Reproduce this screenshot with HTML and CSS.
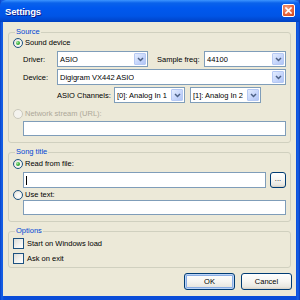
FILE: index.html
```html
<!DOCTYPE html>
<html>
<head>
<meta charset="utf-8">
<title>Settings</title>
<link rel="stylesheet" href="styles.css">
</head>
<body>
<div class="window">
  <div class="titlebar">
    <span class="title">Settings</span>
    <span class="close"><svg width="7" height="7" viewBox="0 0 7 7"><path d="M1 1L6 6M6 1L1 6" stroke="#fff" stroke-width="1.6" stroke-linecap="square"/></svg></span>
  </div>
  <div class="client">
    <fieldset class="group g-source">
      <legend>Source</legend>
      <div class="opt"><span class="radio on"></span><span>Sound device</span></div>
      <div class="row r-driver">
        <span class="lbl w34">Driver:</span>
        <div class="select s-driver"><span class="val">ASIO</span><span class="arrow"><svg width="7" height="5" viewBox="0 0 7 5"><path d="M1 1L3.5 3.5L6 1" fill="none" stroke="#4D6185" stroke-width="1.5"/></svg></span></div>
        <span class="lbl w47 gap9">Sample freq:</span>
        <div class="select s-freq"><span class="val">44100</span><span class="arrow"><svg width="7" height="5" viewBox="0 0 7 5"><path d="M1 1L3.5 3.5L6 1" fill="none" stroke="#4D6185" stroke-width="1.5"/></svg></span></div>
      </div>
      <div class="row r-device">
        <span class="lbl w34">Device:</span>
        <div class="select grow"><span class="val">Digigram VX442 ASIO</span><span class="arrow"><svg width="7" height="5" viewBox="0 0 7 5"><path d="M1 1L3.5 3.5L6 1" fill="none" stroke="#4D6185" stroke-width="1.5"/></svg></span></div>
      </div>
      <div class="row r-asio">
        <span class="lbl w57">ASIO Channels:</span>
        <div class="select s-ch"><span class="val">[0]: Analog In 1</span><span class="arrow"><svg width="7" height="5" viewBox="0 0 7 5"><path d="M1 1L3.5 3.5L6 1" fill="none" stroke="#4D6185" stroke-width="1.5"/></svg></span></div>
        <div class="select s-ch gap5"><span class="val">[1]: Analog In 2</span><span class="arrow"><svg width="7" height="5" viewBox="0 0 7 5"><path d="M1 1L3.5 3.5L6 1" fill="none" stroke="#4D6185" stroke-width="1.5"/></svg></span></div>
      </div>
      <div class="opt disabled o-net"><span class="radio dis"></span><span>Network stream (URL):</span></div>
      <div class="input i-url"></div>
    </fieldset>

    <fieldset class="group g-song">
      <legend>Song title</legend>
      <div class="opt"><span class="radio on"></span><span>Read from file:</span></div>
      <div class="row r-file">
        <div class="input grow"><span class="caret"></span></div>
        <span class="btn small">...</span>
      </div>
      <div class="opt o-use"><span class="radio"></span><span>Use text:</span></div>
      <div class="input i-text"></div>
    </fieldset>

    <fieldset class="group g-opts">
      <legend>Options</legend>
      <div class="opt o-chk"><span class="check"></span><span>Start on Windows load</span></div>
      <div class="opt o-chk2"><span class="check"></span><span>Ask on exit</span></div>
    </fieldset>

    <div class="buttons">
      <span class="btn default">OK</span>
      <span class="btn">Cancel</span>
    </div>
  </div>
</div>
</body>
</html>
```

FILE: styles.css
```css
html, body {
  margin: 0;
  padding: 0;
}
body {
  width: 300px;
  height: 300px;
  overflow: hidden;
  font-family: "Liberation Sans", Arial, sans-serif;
  font-size: 7.5px;
  color: #000;
}
.window {
  width: 300px;
  height: 300px;
  display: flex;
  flex-direction: column;
  background: linear-gradient(90deg, #0841C8 0, #1662E8 2px, #0A4CD8 4px, #0A4CD8 296px, #1662E8 298px, #0737B8 300px);
}
.titlebar {
  height: 22px;
  flex: none;
  display: flex;
  align-items: center;
  justify-content: space-between;
  padding: 0 5px 0 5px;
  background: linear-gradient(#3D95FF 0, #0A62EB 3px, #0058EE 8px, #0055E6 16px, #0048D0 20px, #0040C0 22px);
  border-radius: 6px 6px 0 0;
}
.title {
  color: #fff;
  font-weight: bold;
  font-size: 9.5px;
  letter-spacing: -0.2px;
  text-shadow: 1px 1px 0 #0A1E8C;
}
.close {
  width: 11px;
  height: 11px;
  margin-top: -1px;
  border: 1px solid #fff;
  border-radius: 2px;
  background: radial-gradient(circle at 35% 30%, #F4A282 0, #E5653E 55%, #C8421A 100%);
  display: flex;
  align-items: center;
  justify-content: center;
}
.client {
  flex: 1;
  margin: 0 4px 4px 3px;
  background: #ECE9D8;
  padding: 5px 5px 0 5px;
  display: flex;
  flex-direction: column;
}
.group {
  margin: 0;
  border: 1px solid #D0D0BF;
  border-radius: 3px;
  padding: 0 4px 6px 4px;
  min-width: 0;
}
.group legend {
  color: #0046D5;
  padding: 0 1px;
  margin-left: 2px;
  line-height: 10px;
  height: 10px;
}
.g-song, .g-opts {
  margin-top: 4px;
}
.g-song { padding-top: 1px; padding-bottom: 6px; }
.g-opts { padding-top: 2px; padding-bottom: 3px; }

.opt {
  display: flex;
  align-items: center;
  height: 11px;
  gap: 2px;
}
.disabled { color: #ACA899; }
.radio {
  width: 8px;
  height: 8px;
  border: 1px solid #1C5180;
  border-radius: 50%;
  background: radial-gradient(circle at 60% 60%, #fff 0, #F2F1EC 50%, #D4D2C8 100%);
  position: relative;
  flex: none;
}
.radio.on::after {
  content: "";
  position: absolute;
  left: 2px;
  top: 2px;
  width: 4px;
  height: 4px;
  border-radius: 50%;
  background: radial-gradient(circle at 35% 35%, #A8E8A8 0, #3BB13B 50%, #1A8A1A 100%);
}
.radio.dis {
  border-color: #CAC8BB;
  background: #F4F3EE;
}
.check {
  width: 9px;
  height: 9px;
  border: 1px solid #1C5180;
  background: linear-gradient(135deg, #DCDCD7 0, #F4F4F1 60%, #fff 100%);
  flex: none;
  margin-right: 1px;
}
.row {
  display: flex;
  align-items: center;
  margin-left: 10px;
}
.r-driver { margin-top: 3px; }
.r-device, .r-asio { margin-top: 2px; }
.r-asio { margin-left: 44px; }
.lbl { flex: none; }
.w34 { width: 34px; }
.w47 { width: 47px; }
.w57 { width: 57px; }
.gap9 { margin-left: 9px; }
.gap5 { margin-left: 5px; }
.select {
  height: 16px;
  box-sizing: border-box;
  border: 1px solid #7F9DB9;
  background: #fff;
  display: flex;
  align-items: center;
  justify-content: space-between;
  flex: none;
}
.select .val {
  padding-left: 2px;
  white-space: nowrap;
  overflow: hidden;
}
.select .arrow {
  width: 12px;
  height: 12px;
  margin-right: 1px;
  box-sizing: border-box;
  border: 1px solid #B6C9F4;
  border-radius: 1px;
  background: linear-gradient(135deg, #E4EDFE 0, #C4D4FB 60%, #B2C6F5 100%);
  display: flex;
  align-items: center;
  justify-content: center;
  flex: none;
}
.s-driver { width: 91px; }
.s-freq { width: 82px; }
.s-ch { width: 71px; }
.grow { flex: 1; }
.o-net { margin-top: 5px; }
.input {
  height: 15px;
  box-sizing: border-box;
  border: 1px solid #7F9DB9;
  background: #fff;
}
.i-url { margin-left: 10px; margin-top: 2px; }
.r-file { margin-top: 3px; }
.r-file .input { height: 16px; display: flex; align-items: center; padding-left: 2px; }
.caret {
  width: 1px;
  height: 9px;
  background: #000;
}
.o-use { margin-top: 1px; }
.i-text { margin-left: 10px; margin-top: 0px; }
.o-chk2 { margin-top: 4px; }

.btn {
  box-sizing: border-box;
  display: flex;
  align-items: center;
  justify-content: center;
  border: 1px solid #003C74;
  border-radius: 3px;
  background: linear-gradient(#FFFFFF 0, #F6F5F1 50%, #E9E8E1 85%, #D6D0C5 100%);
  flex: none;
}
.btn.small {
  width: 16px;
  height: 16px;
  margin-left: 4px;
  padding-bottom: 3px;
}
.buttons {
  display: flex;
  justify-content: flex-end;
  gap: 6px;
  margin-top: 5px;
  margin-right: -1px;
}
.buttons .btn {
  width: 51px;
  height: 17px;
}
.btn.default {
  box-shadow: inset 0 0 0 1px #BCD4F6, inset 0 0 0 2px #89ADE4;
}
```
